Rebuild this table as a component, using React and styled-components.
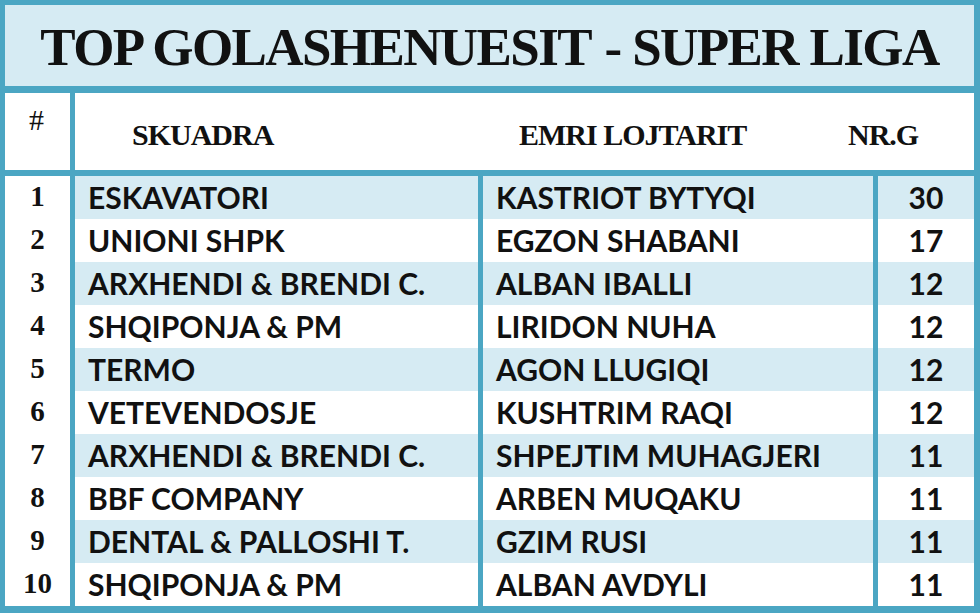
import React from "react";
import styled, { createGlobalStyle } from "styled-components";

const TEAL = "#4ba6c3";
const LIGHT = "#d6ebf3";

const Global = createGlobalStyle`
  html, body { margin: 0; padding: 0; background: #ffffff; }
  * { box-sizing: border-box; }
`;

const Frame = styled.div`
  width: 980px;
  height: 613px;
  background: ${TEAL};
  padding: 5px 6px 7px 5px;
  display: flex;
  flex-direction: column;
  gap: 7px;
`;

const TitleBand = styled.div`
  height: 81px;
  background: ${LIGHT};
  display: flex;
  align-items: center;
  justify-content: center;
  padding-top: 3px;
`;

const Title = styled.h1`
  margin: 0;
  font-family: "Liberation Serif", "Times New Roman", serif;
  font-weight: 700;
  font-size: 53px;
  letter-spacing: -1.6px;
  color: #111;
  white-space: pre;
`;

const Section = styled.div`
  display: flex;
  flex-direction: column;
  gap: 6px;
`;

const HeaderRow = styled.div`
  height: 77px;
  display: grid;
  grid-template-columns: 65px 1fr;
  column-gap: 5px;
`;

const HashCell = styled.div`
  background: #fff;
  font-family: "Liberation Serif", serif;
  font-size: 30px;
  line-height: 1;
  color: #111;
  text-align: center;
  padding-top: 12px;
  padding-right: 2px;
`;

const HeaderLabels = styled.div`
  background: #fff;
  display: grid;
  grid-template-columns: 444px 329px 1fr;
  align-items: center;
  padding-top: 6px;
`;

const HeaderLabel = styled.div`
  font-family: "Liberation Serif", "Times New Roman", serif;
  font-weight: 700;
  font-size: 30px;
  letter-spacing: -1px;
  color: #111;
  padding-left: ${(p) => p.$pad || 0}px;
`;

const Body = styled.div`
  display: grid;
  grid-template-columns: 65px 403px 390px 96px;
  grid-auto-rows: 43px;
  column-gap: 5px;
`;

const RankCell = styled.div`
  background: #fff;
  font-family: "Liberation Serif", "Times New Roman", serif;
  font-weight: 700;
  font-size: 29px;
  color: #111;
  display: flex;
  align-items: center;
  justify-content: center;
  padding-bottom: 3px;
`;

const DataCell = styled.div`
  background: ${(p) => (p.$shade ? LIGHT : "#fff")};
  font-family: Lato, "Open Sans", sans-serif;
  font-weight: 700;
  font-size: 30px;
  color: #111;
  display: flex;
  align-items: center;
  justify-content: ${(p) => (p.$center ? "center" : "flex-start")};
  padding-left: ${(p) => (p.$center ? 0 : 13)}px;
  padding-bottom: 1px;
  white-space: pre;
`;

const rows = [
  ["ESKAVATORI", "KASTRIOT BYTYQI", "30"],
  ["UNIONI SHPK", "EGZON SHABANI", "17"],
  ["ARXHENDI & BRENDI C.", "ALBAN IBALLI", "12"],
  ["SHQIPONJA & PM", "LIRIDON NUHA", "12"],
  ["TERMO", "AGON LLUGIQI", "12"],
  ["VETEVENDOSJE", "KUSHTRIM RAQI", "12"],
  ["ARXHENDI & BRENDI C.", "SHPEJTIM MUHAGJERI", "11"],
  ["BBF COMPANY", "ARBEN MUQAKU", "11"],
  ["DENTAL & PALLOSHI T.", "GZIM RUSI", "11"],
  ["SHQIPONJA & PM", "ALBAN AVDYLI", "11"],
];

export default function App() {
  return (
    <>
      <Global />
      <Frame>
        <TitleBand>
          <Title>{"TOP GOLASHENUESIT \u200A- SUPER LIGA"}</Title>
        </TitleBand>
        <Section>
          <HeaderRow>
            <HashCell>#</HashCell>
            <HeaderLabels>
              <HeaderLabel $pad={57}>SKUADRA</HeaderLabel>
              <HeaderLabel>EMRI LOJTARIT</HeaderLabel>
              <HeaderLabel>NR.G</HeaderLabel>
            </HeaderLabels>
          </HeaderRow>
          <Body>
            {rows.map(([team, player, goals], i) => {
              const shade = i % 2 === 0;
              return (
                <React.Fragment key={i}>
                  <RankCell>{i + 1}</RankCell>
                  <DataCell $shade={shade}>{team}</DataCell>
                  <DataCell $shade={shade}>{player}</DataCell>
                  <DataCell $shade={shade} $center>
                    {goals}
                  </DataCell>
                </React.Fragment>
              );
            })}
          </Body>
        </Section>
      </Frame>
    </>
  );
}
